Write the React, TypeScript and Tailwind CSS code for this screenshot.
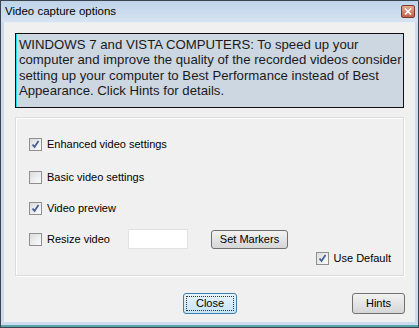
import React from "react";

function Check({ checked }: { checked: boolean }) {
  return (
    <span className="relative inline-block w-[13px] h-[13px] border border-[#8e8f8f] bg-gradient-to-br from-[#dcdcdc] to-[#fbfbfb] shrink-0">
      <span className="absolute inset-[2px] bg-gradient-to-br from-[#e3e3e3] to-[#f8f8f8]" />
      {checked && (
        <svg className="absolute left-0 top-0" width="11" height="11" viewBox="0 0 11 11">
          <path d="M2.5 5.5 L4.5 8 L8.5 2" fill="none" stroke="#4a5f97" strokeWidth="1.8" />
        </svg>
      )}
    </span>
  );
}

function Row({ checked, label }: { checked: boolean; label: string }) {
  return (
    <div className="flex items-center gap-[5px] h-[13px]">
      <Check checked={checked} />
      <span className="text-[11px] text-black leading-none">{label}</span>
    </div>
  );
}

export default function App() {
  return (
    <div
      className="w-[419px] h-[328px] flex flex-col border border-[#3a4550] bg-[#cbdcee] overflow-hidden"
      style={{ fontFamily: '"Liberation Sans", Arial, sans-serif' }}
    >
      {/* title bar */}
      <div className="h-[21px] flex items-center justify-between pl-[4px] pr-[3px] bg-gradient-to-b from-[#bed3ea] to-[#d6e3f2] shrink-0">
        <span className="text-[11.5px] text-black">Video capture options</span>
        <span className="w-[14px] h-[13px] rounded-[2px] border border-[#7a3a2a] bg-gradient-to-b from-[#e8a890] to-[#c0604a] flex items-center justify-center">
          <svg width="8" height="7" viewBox="0 0 8 7">
            <path d="M1 0.5 L7 6.5 M7 0.5 L1 6.5" stroke="#fff" strokeWidth="1.6" />
          </svg>
        </span>
      </div>
      {/* body */}
      <div className="flex-1 mx-[3px] mb-[3px] bg-[#f0f0f0] border-t border-[#e8eef5] flex flex-col px-[11px] pt-[10px]">
        <div className="h-[75px] border border-[#101010] bg-[#cdd7e2] flex">
          <div className="w-[3px] bg-[#22e0ee]" />
          <div className="pl-[2px] pt-[3px] text-[13.2px] leading-[15.4px] text-[#1a1a1a]">
            WINDOWS 7 and VISTA COMPUTERS: To speed up your computer and improve the quality of the recorded videos consider setting up your computer to Best Performance instead of Best Appearance. Click Hints for details.
          </div>
        </div>
        <div className="mt-[9px] h-[159px] border border-[#dcdcdc] shadow-[inset_1px_1px_0_#ffffff,1px_1px_0_#ffffff] flex flex-col pl-[13px] pr-[11px] pt-[20px]">
          <Row checked label="Enhanced video settings" />
          <div className="h-[20px]" />
          <Row checked={false} label="Basic video settings" />
          <div className="h-[18px]" />
          <Row checked label="Video preview" />
          <div className="flex items-center mt-[14px] h-[20px]">
            <div className="w-[99px]">
              <Row checked={false} label="Resize video" />
            </div>
            <div className="w-[60px] h-[20px] bg-white border border-[#e2e2e2]" />
            <div className="w-[23px]" />
            <button className="w-[77px] h-[19px] rounded-[3px] border border-[#707070] bg-gradient-to-b from-[#f2f2f2] to-[#d6d6d6] text-[11px] text-black leading-none">
              Set Markers
            </button>
          </div>
          <div className="flex justify-end mt-[3px] pr-[1px]">
            <Row checked label="Use Default" />
          </div>
        </div>
        <div className="flex mt-[17px] h-[21px] items-center">
          <div className="w-[168px]" />
          <button className="relative w-[54px] h-[21px] rounded-[3px] border border-[#3c7fb1] bg-gradient-to-b from-[#e8f4fb] to-[#c5e4f5] text-[11px] text-black leading-none">
            <span className="absolute inset-[2px] border border-dotted border-[#333]" />
            Close
          </button>
          <div className="flex-1" />
          <button className="w-[53px] h-[21px] rounded-[3px] border border-[#707070] bg-gradient-to-b from-[#f2f2f2] to-[#d6d6d6] text-[11px] text-black leading-none mr-[-1px]">
            Hints
          </button>
        </div>
      </div>
      <div className="h-[2px] bg-[#5aa3aa] shrink-0" />
    </div>
  );
}
